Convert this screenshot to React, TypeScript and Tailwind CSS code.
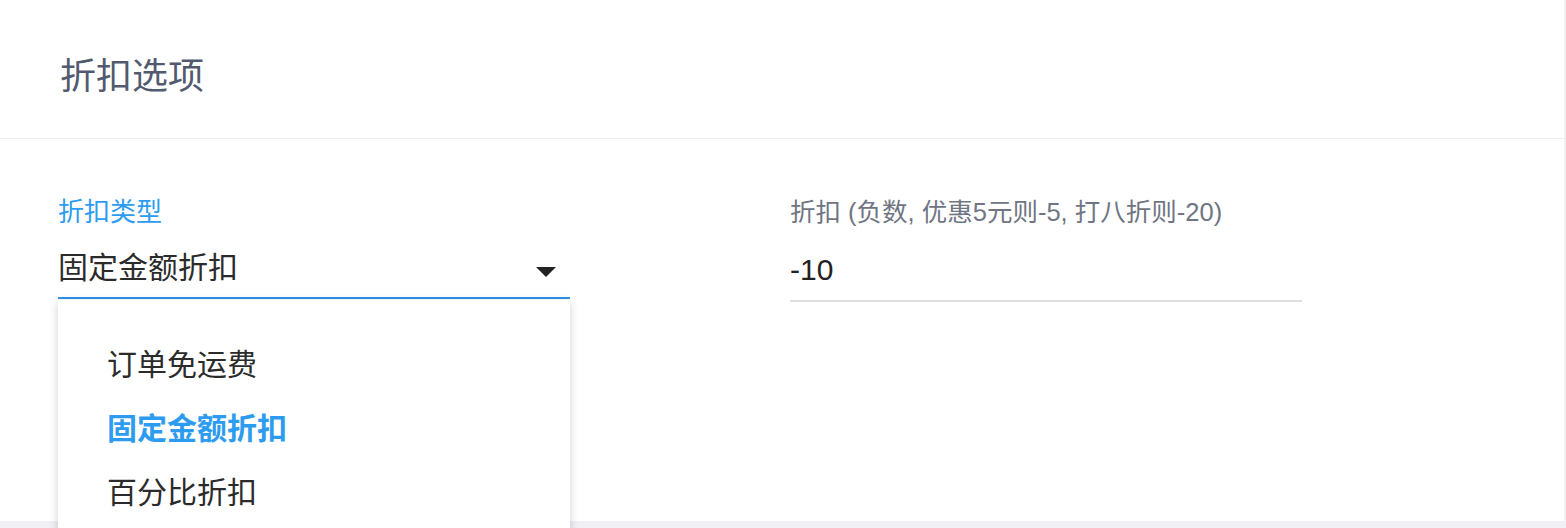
import React from 'react'

const font = { fontFamily: '"Liberation Sans", "Noto Sans CJK SC", sans-serif' }

const options = ['订单免运费', '固定金额折扣', '百分比折扣']

function SelectField() {
  const selected = '固定金额折扣'
  return (
    <div className="relative w-[512px]">
      <div className="h-[26px] text-[26px] leading-[26px] text-[#2d9cf0]">折扣类型</div>
      <div className="flex items-end justify-between h-[74px] border-b-2 border-[#2d93ea]">
        <span className="text-[30px] leading-[30px] text-[#2b2b2b] mb-[14px]">{selected}</span>
        <span className="w-0 h-0 border-l-[10px] border-r-[10px] border-t-[10px] border-l-transparent border-r-transparent border-t-[#222] mr-[14px] mb-[20px]" />
      </div>
      <div className="absolute left-0 top-[101px] w-[512px] bg-white pt-[32px] pb-[24px] rounded-[2px] shadow-[0_2px_10px_rgba(0,0,0,0.18)]">
        {options.map((o) => (
          <div
            key={o}
            className={
              'h-[64px] flex items-center pl-[49px] text-[30px] ' +
              (o === selected ? 'text-[#2d9cf0] font-bold' : 'text-[#2b2b2b]')
            }
          >
            {o}
          </div>
        ))}
      </div>
    </div>
  )
}

function InputField() {
  return (
    <div className="w-[512px]">
      <div className="h-[26px] text-[25.5px] leading-[26px] text-[#6f7583] whitespace-nowrap">
        折扣 (负数, 优惠5元则-5, 打八折则-20)
      </div>
      <div className="flex items-end h-[77px] border-b-2 border-[#dedede]">
        <span className="text-[30px] leading-[30px] text-[#222] mb-[15px]">-10</span>
      </div>
    </div>
  )
}

export default function App() {
  return (
    <div className="h-[528px] w-[1566px] bg-[#f0f0f5] overflow-hidden" style={font}>
      <div className="w-[1564px] h-[521px] bg-white flex flex-col">
        <div className="h-[139px] border-b border-[#ececf0] pl-[60px] pt-[59px]">
          <h1 className="text-[36px] leading-[36px] text-[#515a6e]">折扣选项</h1>
        </div>
        <div className="flex gap-[220px] pl-[58px] pt-[60px]">
          <SelectField />
          <InputField />
        </div>
      </div>
    </div>
  )
}
